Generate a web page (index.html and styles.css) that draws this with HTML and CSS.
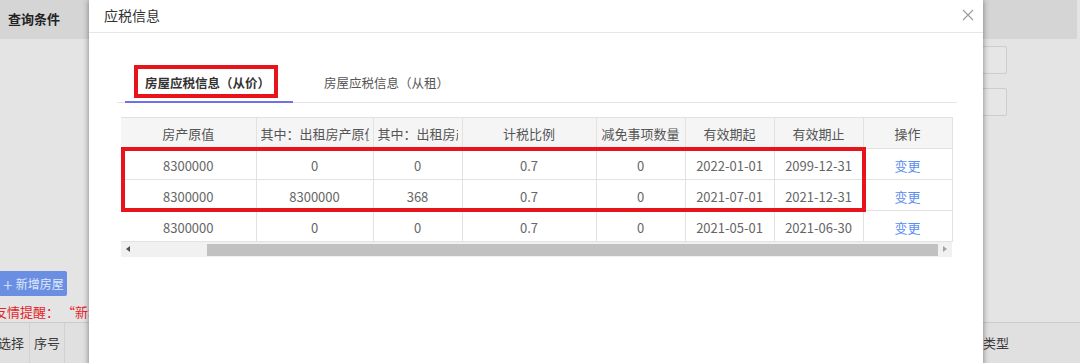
FILE: index.html
```html
<!DOCTYPE html>
<html lang="zh-CN">
<head>
    <meta charset="UTF-8">
    <meta name="viewport" content="width=device-width, initial-scale=1.0">
    <title>应税信息</title>
    <link rel="stylesheet" href="styles.css">
</head>
<body>
    <div class="page">
        <div class="query-head">查询条件</div>
        <div class="query-form">
            <div class="field"></div>
            <div class="field"></div>
        </div>
        <div class="toolbar">
            <button class="btn-add"><span class="plus">+</span>新增房屋</button>
        </div>
        <div class="tip">友情提醒： “新增房屋”后请及时维护应税信息</div>
        <div class="grid-head">
            <div class="gh-cell gh-check">选择</div>
            <div class="gh-cell gh-no">序号</div>
            <div class="gh-fill"></div>
            <div class="gh-cell gh-type">类型</div>
        </div>
    </div>

    <div class="modal">
        <div class="modal-head">
            <span class="modal-title">应税信息</span>
            <svg class="modal-close" width="12" height="12" viewBox="0 0 12 12">
                <path d="M1 1L11 11M11 1L1 11" stroke="#9a9a9a" stroke-width="1.1" fill="none"/>
            </svg>
        </div>
        <div class="modal-body">
            <div class="tabs">
                <div class="tab active">房屋应税信息（从价）<span class="mark mark-tab"></span></div>
                <div class="tab">房屋应税信息（从租）</div>
            </div>

            <div class="table-wrap">
                <table class="tax-table">
                    <colgroup>
                        <col style="width:135px">
                        <col style="width:117px">
                        <col style="width:89px">
                        <col style="width:134px">
                        <col style="width:89px">
                        <col style="width:89px">
                        <col style="width:89px">
                        <col style="width:89px">
                    </colgroup>
                    <thead>
                        <tr>
                            <th>房产原值</th>
                            <th class="clip"><span class="clip-text">其中：出租房产原值</span></th>
                            <th class="clip"><span class="clip-text">其中：出租房产租金</span></th>
                            <th>计税比例</th>
                            <th>减免事项数量</th>
                            <th>有效期起</th>
                            <th>有效期止</th>
                            <th>操作</th>
                        </tr>
                    </thead>
                    <tbody>
                        <tr>
                            <td>8300000</td>
                            <td>0</td>
                            <td>0</td>
                            <td>0.7</td>
                            <td>0</td>
                            <td>2022-01-01</td>
                            <td>2099-12-31</td>
                            <td><a class="op" href="#">变更</a></td>
                        </tr>
                        <tr>
                            <td>8300000</td>
                            <td>8300000</td>
                            <td>368</td>
                            <td>0.7</td>
                            <td>0</td>
                            <td>2021-07-01</td>
                            <td>2021-12-31</td>
                            <td><a class="op" href="#">变更</a></td>
                        </tr>
                        <tr>
                            <td>8300000</td>
                            <td>0</td>
                            <td>0</td>
                            <td>0.7</td>
                            <td>0</td>
                            <td>2021-05-01</td>
                            <td>2021-06-30</td>
                            <td><a class="op" href="#">变更</a></td>
                        </tr>
                    </tbody>
                </table>
                <span class="mark mark-rows"></span>
                <div class="hscroll">
                    <span class="arrow arrow-left"></span>
                    <div class="thumb"></div>
                    <span class="arrow arrow-right"></span>
                </div>
            </div>
        </div>
    </div>
</body>
</html>
```

FILE: styles.css
```css
html, body { margin: 0; padding: 0; }
body { width: 1080px; height: 363px; overflow: hidden; position: relative; background: #e4e4e4; font-family: "Noto Sans CJK SC", "Liberation Sans", sans-serif; color: #333; }

/* background page (dimmed by the modal) */
.page { width: 1080px; height: 363px; }
.query-head { height: 39px; line-height: 37px; margin-right: 3px; padding-left: 8px; background: #d5d5d5; font-size: 13px; font-weight: bold; color: #222; }
.query-form { display: flex; flex-direction: column; align-items: flex-end; gap: 14px; padding: 7px 73px 0 0; }
.field { width: 120px; height: 26px; border: 1px solid #cdcdcd; border-radius: 2px; background: #e6e6e6; }
.toolbar { margin-top: 155px; }
.btn-add { display: flex; align-items: center; height: 25px; width: 67px; padding: 0 0 0 3px; border: none; border-radius: 0 2px 2px 0; background: #6a8fe2; color: #dfe7fb; font-family: inherit; font-size: 12px; }
.plus { font-size: 18px; font-weight: 300; line-height: 1; margin-right: 3px; }
.tip { height: 26px; line-height: 32px; margin-left: -6px; font-size: 13px; color: #e5262a; white-space: nowrap; }
.grid-head { display: flex; height: 41px; border-top: 1px solid #cbcbcb; background: #e0e0e0; }
.gh-cell { line-height: 40px; font-size: 13px; color: #3a3a3a; white-space: nowrap; }
.gh-check { width: 29px; border-right: 1px solid #d2d2d2; text-indent: -2px; }
.gh-no { width: 34px; border-right: 1px solid #d2d2d2; text-align: center; }
.gh-fill { flex: 1; }
.gh-type { width: 97px; }

/* modal */
.modal { position: absolute; left: 89px; top: 0; width: 894px; height: 380px; background: #fff; box-shadow: 0 0 6px rgba(0,0,0,0.45); }
.modal-head { position: relative; height: 32px; border-bottom: 1px solid #e6e6e6; }
.modal-title { display: block; padding-left: 15px; line-height: 30px; font-size: 14px; color: #333; }
.modal-close { position: absolute; left: 873px; top: 9px; }
.modal-body { padding: 33px 26px 0 28px; }

.tabs { display: flex; gap: 11px; padding-left: 8px; border-bottom: 1px solid #e5e5e5; }
.tab { position: relative; height: 35px; line-height: 33px; padding: 0 23px 0 20px; font-size: 12.5px; color: #555; }
.tab.active { font-weight: bold; color: #333; border-bottom: 2px solid #7070ee; margin-bottom: -1px; }

.mark { position: absolute; border: 4px solid #e8141c; box-sizing: border-box; pointer-events: none; }
.mark-tab { left: 9px; top: -1px; width: 144px; height: 33px; }

.table-wrap { position: relative; width: 831px; margin: 14px 0 0 4px; }
.tax-table { width: 831px; table-layout: fixed; border-collapse: collapse; font-size: 13px; }
.tax-table th, .tax-table td { height: 30px; padding: 0 4px; border: 1px solid #e2e2e2; text-align: center; white-space: nowrap; overflow: hidden; color: #666; font-weight: normal; }
.tax-table td { height: 28px; padding-top: 2px; }
.tax-table th { background: #f5f5f5; color: #555; }
.tax-table th:first-child, .tax-table td:first-child { border-left: none; }
.tax-table th.clip { text-align: left; }
.clip-text { display: block; overflow: hidden; }
.op { color: #5c8ef0; text-decoration: none; }
.mark-rows { left: 0; top: 30px; width: 745px; height: 65px; }

.hscroll { position: relative; height: 15px; background: #f1f1f1; }
.thumb { position: absolute; left: 86px; right: 14px; top: 2px; height: 12px; background: #c1c1c1; }
.arrow { position: absolute; top: 4px; width: 0; height: 0; border-top: 3px solid transparent; border-bottom: 3px solid transparent; }
.arrow-left { left: 5px; border-right: 4px solid #505050; }
.arrow-right { right: 5px; border-left: 4px solid #a3a3a3; }
```
